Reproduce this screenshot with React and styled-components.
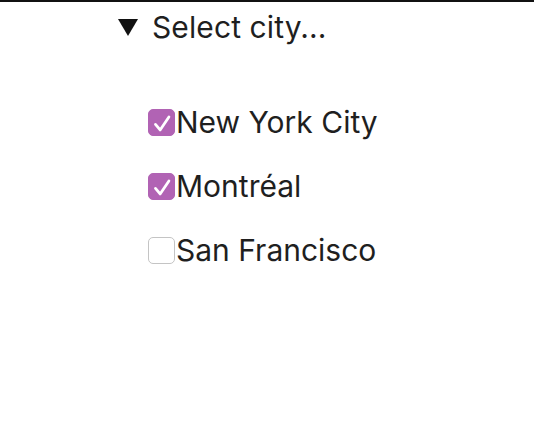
import React, { useState } from "react";
import styled, { createGlobalStyle } from "styled-components";

const GlobalStyle = createGlobalStyle`
  body {
    margin: 0;
    background: #ffffff;
    font-family: Inter, "Liberation Sans", Arial, sans-serif;
    color: #1f1f1f;
  }
`;

const Page = styled.div`
  border-top: 2px solid #111111;
  min-height: 446px;
`;

const Details = styled.details`
  padding-left: 118px;
`;

const Summary = styled.summary`
  list-style: none;
  display: flex;
  align-items: center;
  gap: 14px;
  height: 50px;
  font-size: 30px;
  letter-spacing: 0.1px;
  cursor: pointer;
  &::-webkit-details-marker {
    display: none;
  }
`;

const Marker = styled.svg`
  width: 20px;
  height: 17px;
  flex-shrink: 0;
  transform: ${(p) => (p.$open ? "none" : "rotate(-90deg)")};
`;

const List = styled.div`
  margin-top: 38px;
  padding-left: 30px;
  display: flex;
  flex-direction: column;
`;

const Row = styled.label`
  display: flex;
  align-items: center;
  height: 64px;
  font-size: 30px;
  cursor: pointer;
`;

const Box = styled.span`
  width: 27px;
  height: 27px;
  box-sizing: border-box;
  border-radius: 5px;
  border: 1px solid ${(p) => (p.$checked ? "#b163b4" : "#c4c4c4")};
  background: ${(p) => (p.$checked ? "#b163b4" : "#ffffff")};
  display: flex;
  align-items: center;
  justify-content: center;
  flex-shrink: 0;
  margin-right: 1px;
`;

const HiddenInput = styled.input`
  position: absolute;
  opacity: 0;
  width: 0;
  height: 0;
`;

const cities = ["New York City", "Montréal", "San Francisco"];

const App = () => {
  const [open, setOpen] = useState(true);
  const [checked, setChecked] = useState({
    "New York City": true,
    "Montréal": true,
    "San Francisco": false,
  });

  const toggle = (city) =>
    setChecked((prev) => ({ ...prev, [city]: !prev[city] }));

  return (
    <>
      <GlobalStyle />
      <Page>
        <Details
          open={open}
          onToggle={(e) => setOpen(e.currentTarget.open)}
        >
          <Summary>
            <Marker $open={open} viewBox="0 0 20 17">
              <path d="M0 0 H20 L10 17 Z" fill="#111111" />
            </Marker>
            Select city...
          </Summary>
          <List>
            {cities.map((city) => (
              <Row key={city}>
                <HiddenInput
                  type="checkbox"
                  checked={checked[city]}
                  onChange={() => toggle(city)}
                />
                <Box $checked={checked[city]}>
                  {checked[city] && (
                    <svg width="27" height="27" viewBox="0 0 27 27">
                      <path
                        d="M7 15.5 L12 21.5 L21.5 7.5"
                        fill="none"
                        stroke="#ffffff"
                        strokeWidth="3"
                        strokeLinecap="round"
                        strokeLinejoin="round"
                      />
                    </svg>
                  )}
                </Box>
                {city}
              </Row>
            ))}
          </List>
        </Details>
      </Page>
    </>
  );
};

export default App;
